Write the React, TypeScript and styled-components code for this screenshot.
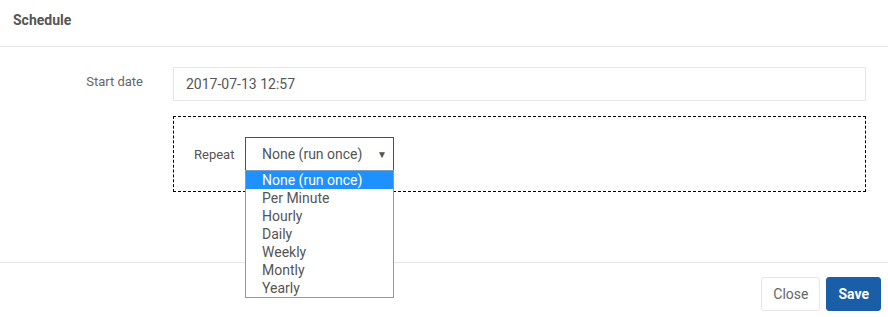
import styled, { createGlobalStyle } from 'styled-components';

const options = [
  'None (run once)',
  'Per Minute',
  'Hourly',
  'Daily',
  'Weekly',
  'Montly',
  'Yearly',
];

const GlobalStyle = createGlobalStyle`
  html, body {
    margin: 0;
    padding: 0;
    background: #fff;
    font-family: Roboto, "Liberation Sans", Arial, sans-serif;
  }
`;

export default function App() {
  const selected = 0;
  return (
    <Modal>
      <GlobalStyle />
      <Header>
        <Title>Schedule</Title>
      </Header>
      <Body>
        <Label>Start date</Label>
        <TextInput>2017-07-13 12:57</TextInput>
        <span />
        <RepeatBox>
          <RepeatLabel>Repeat</RepeatLabel>
          <SelectWrap>
            <Select>
              <span>{options[selected]}</span>
              <Arrow>▼</Arrow>
            </Select>
            <OptionList>
              {options.map((opt, i) => (
                <Option key={opt} $active={i === selected}>
                  {opt}
                </Option>
              ))}
            </OptionList>
          </SelectWrap>
        </RepeatBox>
      </Body>
      <Footer>
        <Button>Close</Button>
        <Button $primary>Save</Button>
      </Footer>
    </Modal>
  );
}

const Modal = styled.div`
  width: 888px;
  height: 317px;
  display: flex;
  flex-direction: column;
  background: #fff;
`;

const Header = styled.div`
  height: 47px;
  box-sizing: border-box;
  padding: 0 13px;
  display: flex;
  align-items: center;
  border-bottom: 1px solid #e5e5e5;
`;

const Title = styled.div`
  font-size: 14px;
  font-weight: 700;
  color: #555;
  margin-top: -7px;
`;

const Body = styled.div`
  display: grid;
  grid-template-columns: 143px 1fr;
  align-content: start;
  column-gap: 30px;
  row-gap: 15px;
  padding: 20px 22px 0 0;
  height: 216px;
  box-sizing: border-box;
  border-bottom: 1px solid #e5e5e5;
`;

const Label = styled.div`
  text-align: right;
  font-size: 13px;
  color: #666;
  line-height: 18px;
  padding-top: 6px;
`;

const TextInput = styled.div`
  height: 34px;
  box-sizing: border-box;
  border: 1px solid #e5e5e5;
  padding: 0 12px;
  display: flex;
  align-items: center;
  font-size: 14px;
  color: #555;
`;

const RepeatBox = styled.div`
  height: 76px;
  box-sizing: border-box;
  border: 1px dashed #000;
  padding: 20px 20px;
  display: flex;
  align-items: center;
  gap: 11px;
`;

const RepeatLabel = styled.div`
  font-size: 13px;
  color: #555;
  width: 40px;
`;

const SelectWrap = styled.div`
  position: relative;
  width: 149px;
`;

const Select = styled.div`
  height: 34px;
  box-sizing: border-box;
  border: 1px solid #1c5a9a;
  padding: 0 6px 0 16px;
  display: flex;
  align-items: center;
  justify-content: space-between;
  font-size: 14px;
  color: #555;
`;

const Arrow = styled.span`
  font-size: 10px;
  color: #555;
`;

const OptionList = styled.div`
  position: absolute;
  top: 33px;
  left: 0;
  width: 149px;
  box-sizing: border-box;
  border: 1px solid #7f9db9;
  background: #fff;
  z-index: 2;
`;

const Option = styled.div<{ $active?: boolean }>`
  height: 18px;
  line-height: 18px;
  padding-left: 16px;
  font-size: 14px;
  color: ${(p) => (p.$active ? '#fff' : '#555')};
  background: ${(p) => (p.$active ? '#1e90ff' : 'transparent')};
`;

const Footer = styled.div`
  display: flex;
  justify-content: flex-end;
  gap: 6px;
  padding: 14px 7px 0 0;
`;

const Button = styled.div<{ $primary?: boolean }>`
  height: 34px;
  box-sizing: border-box;
  padding: 0 11px;
  display: flex;
  align-items: center;
  border-radius: 3px;
  font-size: 14px;
  font-weight: ${(p) => (p.$primary ? 700 : 400)};
  color: ${(p) => (p.$primary ? '#fff' : '#666')};
  background: ${(p) => (p.$primary ? '#1b5ea8' : '#fff')};
  border: 1px solid ${(p) => (p.$primary ? '#1b5ea8' : '#e5e5e5')};
`;
